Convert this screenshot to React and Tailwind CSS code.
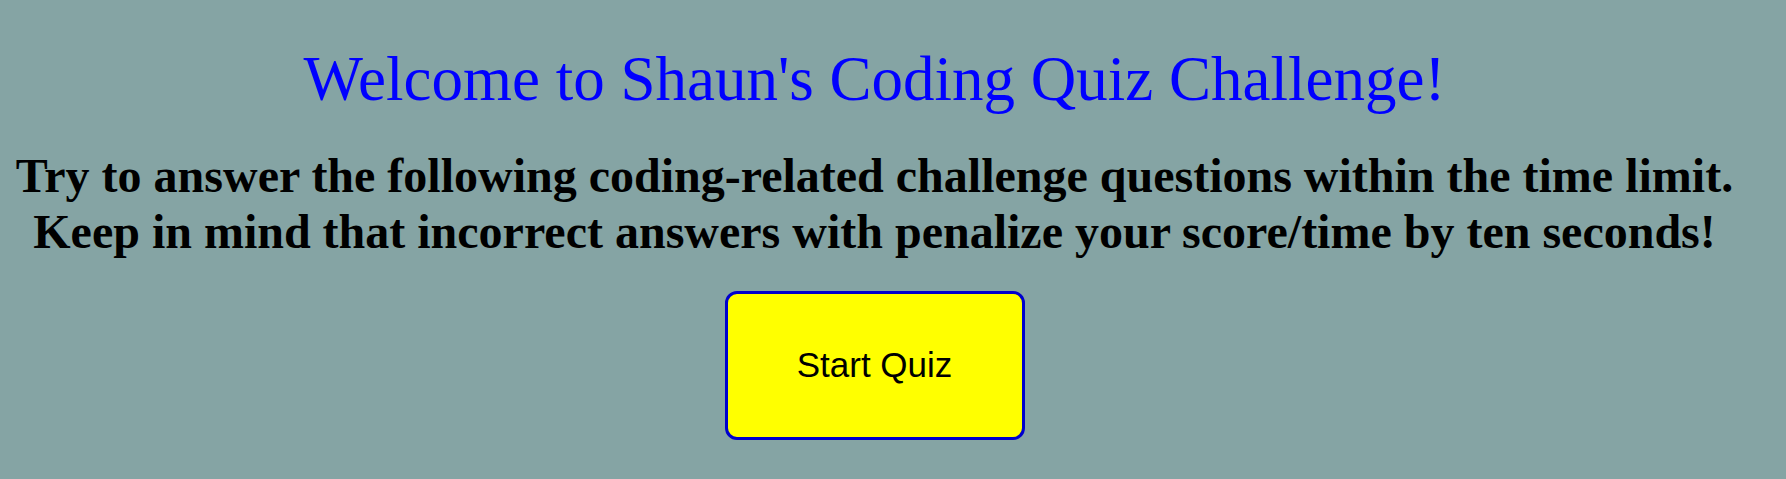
export default function App() {
  return (
    <div className="min-h-screen w-full bg-[#85a4a4]">
      <div className="w-[1749px] pt-[42px] text-center font-['Liberation_Serif',serif]">
        {/* Heading */}
        <h1 className="text-[63px] leading-[74px] text-[#0000ff] font-normal">
          Welcome to Shaun's Coding Quiz Challenge!
        </h1>

        {/* Instructions */}
        <p className="mt-[32px] text-[48px] leading-[56px] font-bold text-black">
          Try to answer the following coding-related challenge questions within the time limit.
          <br />
          Keep in mind that incorrect answers with penalize your score/time by ten seconds!
        </p>

        {/* Start button */}
        <div className="flex justify-center mt-[31px]">
          <button className="w-[300px] h-[149px] rounded-[12px] border-[3px] border-[#0000cd] bg-[#ffff00] text-[35px] text-black font-['Liberation_Sans',Arial,sans-serif]">
            Start Quiz
          </button>
        </div>
      </div>
    </div>
  );
}
